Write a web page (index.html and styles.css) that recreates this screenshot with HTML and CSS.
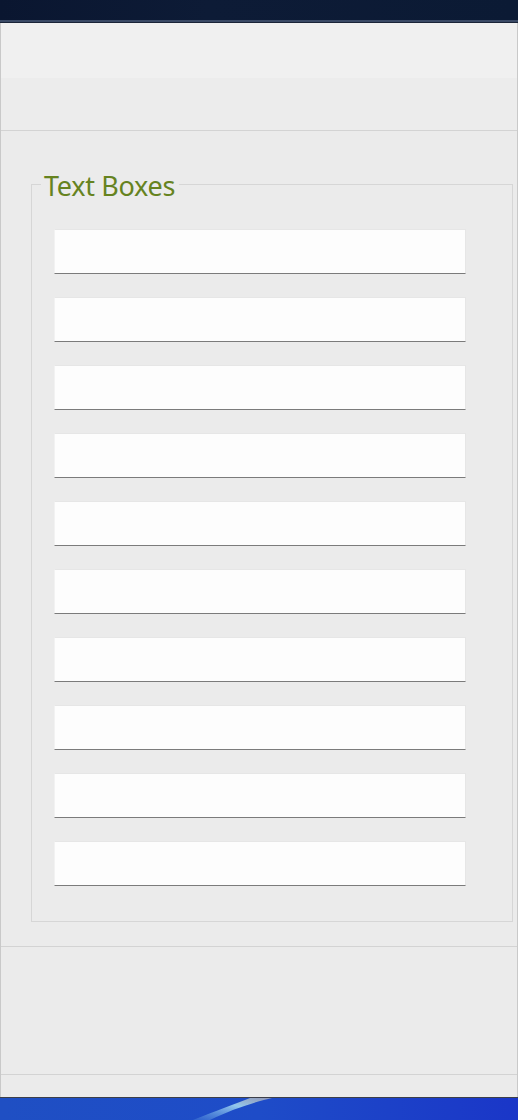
FILE: index.html
```html
<!DOCTYPE html>
<html>
<head>
<meta charset="utf-8">
<link rel="stylesheet" href="styles.css">
</head>
<body>
<div class="titlebar"></div>
<div class="window">
  <div class="header">
    <div class="band band-top"></div>
    <div class="band band-bottom"></div>
  </div>
  <main class="content">
    <fieldset class="group">
      <legend class="group-title">Text Boxes</legend>
      <div class="boxes">
        <input class="textbox" type="text">
        <input class="textbox" type="text">
        <input class="textbox" type="text">
        <input class="textbox" type="text">
        <input class="textbox" type="text">
        <input class="textbox" type="text">
        <input class="textbox" type="text">
        <input class="textbox" type="text">
        <input class="textbox" type="text">
        <input class="textbox" type="text">
      </div>
    </fieldset>
  </main>
  <div class="footer"></div>
  <div class="footer-strip"></div>
</div>
<div class="taskbar">
  <svg class="streak" width="518" height="23" viewBox="0 0 518 23">
    <defs>
      <linearGradient id="sg" x1="0" y1="1" x2="1" y2="0">
        <stop offset="0" stop-color="#6fb0e8" stop-opacity="0.2"/>
        <stop offset="0.6" stop-color="#9fd4f0" stop-opacity="0.9"/>
        <stop offset="1" stop-color="#d8c8b0" stop-opacity="0.6"/>
      </linearGradient>
    </defs>
    <path d="M193 23 C215 14 238 6 250 1 L272 1 C258 4 232 12 210 23 Z" fill="url(#sg)"/>
  </svg>
</div>
</body>
</html>
```
FILE: styles.css
```css
* { box-sizing: border-box; }
html, body { margin: 0; padding: 0; }
body {
  width: 518px;
  height: 1120px;
  overflow: hidden;
  background: #ebebeb;
  font-family: "Noto Sans", "Open Sans", sans-serif;
}
.titlebar {
  height: 23px;
  background: linear-gradient(90deg, #0a1630 0%, #0d1b36 40%, #0b1a34 100%);
  border-bottom: 1px solid #1a2438;
  box-shadow: inset 0 -2px 0 #3b4a66;
}
.window {
  height: 1074px;
  border-left: 1px solid #c9c9c9;
  border-right: 1px solid #c9c9c9;
  display: flex;
  flex-direction: column;
  background: #ebebeb;
}
.header {
  border-bottom: 1px solid #d3d3d3;
}
.band-top { height: 55px; background: #f0f0f0; }
.band-bottom { height: 52px; background: #ececec; }
.content {
  height: 816px;
  padding: 34px 4px 0 30px;
  border-bottom: 1px solid #d3d3d3;
}
.group {
  margin: 0;
  width: 482px;
  border: 1px solid #d6d6d6;
  padding: 26px 0 35px 22px;
  min-width: 0;
}
.group-title {
  margin-left: -13px;
  padding: 4px 4px 0 3px;
  font-size: 27px;
  line-height: 34px;
  letter-spacing: -0.3px;
  color: #66831f;
  font-weight: 400;
}
.boxes {
  display: flex;
  flex-direction: column;
  gap: 23px;
}
.textbox {
  display: block;
  width: 412px;
  height: 45px;
  margin: 0;
  padding: 0 6px;
  background: #fdfdfd;
  border: 1px solid #e6e6e6;
  border-left-color: #f2f2f2;
  border-bottom: 1px solid #7b7b7b;
  border-radius: 0;
  outline: none;
  font: inherit;
}
.footer {
  height: 128px;
  border-bottom: 1px solid #d3d3d3;
}
.footer-strip {
  flex: 1;
}
.taskbar {
  height: 23px;
  border-top: 1px solid #3c3f48;
  background: linear-gradient(90deg, #1f4fc3 0%, #1e4cc8 50%, #1a36c8 100%);
  overflow: hidden;
}
.streak { display: block; margin-top: -1px; }
```
